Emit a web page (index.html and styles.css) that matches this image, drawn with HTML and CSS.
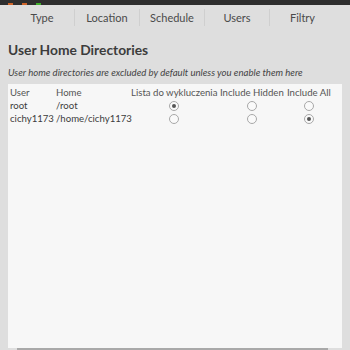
FILE: index.html
```html
<!DOCTYPE html>
<html>
<head>
<meta charset="utf-8">
<link rel="stylesheet" href="styles.css">
</head>
<body>
<div class="window">
  <div class="titlebar">
    <span class="dot orange"></span>
    <span class="dot orange"></span>
    <span class="dot green"></span>
  </div>
  <div class="tabs">
    <div class="tab">Type</div>
    <div class="tab">Location</div>
    <div class="tab">Schedule</div>
    <div class="tab">Users</div>
    <div class="tab last">Filtry</div>
  </div>
  <div class="content">
    <h1 class="title">User Home Directories</h1>
    <p class="note">User home directories are excluded by default unless you enable them here</p>
    <div class="panel">
      <div class="row head">
        <div class="c-user">User</div>
        <div class="c-home">Home</div>
        <div class="c-ex">Lista do wykluczenia</div>
        <div class="c-hid">Include Hidden</div>
        <div class="c-all">Include All</div>
      </div>
      <div class="row">
        <div class="c-user">root</div>
        <div class="c-home">/root</div>
        <div class="c-ex"><span class="radio on"></span></div>
        <div class="c-hid"><span class="radio"></span></div>
        <div class="c-all"><span class="radio"></span></div>
      </div>
      <div class="row">
        <div class="c-user">cichy1173</div>
        <div class="c-home">/home/cichy1173</div>
        <div class="c-ex"><span class="radio"></span></div>
        <div class="c-hid"><span class="radio"></span></div>
        <div class="c-all"><span class="radio on"></span></div>
      </div>
    </div>
  </div>
  <div class="bottom"></div>
</div>
</body>
</html>
```
FILE: styles.css
```css
html, body {
  margin: 0;
  padding: 0;
  width: 350px;
  height: 350px;
  overflow: hidden;
  background: #dedede;
  font-family: "Lato", "DejaVu Sans", sans-serif;
  color: #3c3c3c;
}
.window {
  display: flex;
  flex-direction: column;
  height: 350px;
}
.titlebar {
  height: 5px;
  background: #2e2e2e;
  display: flex;
  align-items: flex-end;
  gap: 9px;
  padding-left: 8px;
}
.dot {
  width: 5px;
  height: 2px;
  display: block;
}
.dot.orange { background: #d0652a; }
.dot.green { background: #3fae2a; }
.tabs {
  display: flex;
  padding: 0 0 0 10px;
  height: 25px;
  align-items: center;
}
.tab {
  width: 65px;
  text-align: center;
  font-size: 11px;
  color: #4a4a4a;
  border-right: 1px solid #cfcfcf;
  line-height: 17px;
  box-sizing: border-box;
}
.tab.last { border-right: none; }
.content {
  flex: 1;
  display: flex;
  flex-direction: column;
  padding: 0 8px 0 8px;
}
.title {
  margin: 10px 0 0 0;
  font-size: 13.8px;
  font-weight: bold;
  line-height: 20px;
  color: #3c3c3c;
}
.note {
  margin: 6px 0 0 0;
  font-size: 9.6px;
  font-style: italic;
  line-height: 14px;
  color: #444;
}
.panel {
  flex: 1;
  background: #f7f7f7;
  margin-top: 4px;
  padding-top: 1px;
  font-size: 9.6px;
}
.row {
  display: flex;
  height: 13px;
  line-height: 13px;
  align-items: center;
  white-space: nowrap;
}
.row.head { height: 14px; color: #555; }
.c-user { width: 48px; padding-left: 2px; box-sizing: border-box; }
.c-home { width: 75px; }
.c-ex { width: 85px; display: flex; justify-content: center; }
.c-hid { width: 71px; display: flex; justify-content: center; }
.c-all { width: 44px; display: flex; justify-content: center; }
.row.head .c-ex,
.row.head .c-hid,
.row.head .c-all { display: block; }
.row.head .c-hid { padding-left: 4px; box-sizing: border-box; }
.radio {
  width: 10px;
  height: 10px;
  border: 1px solid #a8a8a8;
  border-radius: 50%;
  background: #fafafa;
  box-sizing: border-box;
  display: flex;
  align-items: center;
  justify-content: center;
}
.radio.on::after {
  content: "";
  width: 4px;
  height: 4px;
  border-radius: 50%;
  background: #555;
}
.bottom {
  height: 2px;
  margin: 0 22px 0 17px;
  background: #a9a9a9;
}
```
